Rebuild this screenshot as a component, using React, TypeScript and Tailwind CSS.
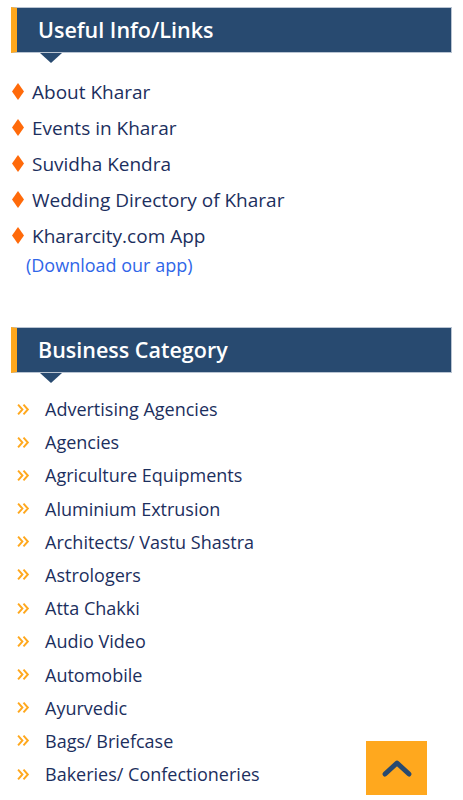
import React from "react";

const usefulLinks = [
  "About Kharar",
  "Events in Kharar",
  "Suvidha Kendra",
  "Wedding Directory of Kharar",
  "Khararcity.com App",
];

const categories = [
  "Advertising Agencies",
  "Agencies",
  "Agriculture Equipments",
  "Aluminium Extrusion",
  "Architects/ Vastu Shastra",
  "Astrologers",
  "Atta Chakki",
  "Audio Video",
  "Automobile",
  "Ayurvedic",
  "Bags/ Briefcase",
  "Bakeries/ Confectioneries",
  "Banks",
];

function SectionTitle({ title }: { title: string }) {
  return (
    <div className="relative">
      <div className="flex h-[46px] items-center border border-[#b9c4d2] border-l-[6px] border-l-[#ffa81e] bg-[#284a70] pl-[21px]">
        <h2 className="text-[21.5px] font-semibold text-white">{title}</h2>
      </div>
      {/* little pointer under the bar */}
      <div className="absolute left-[29px] top-[46px] h-0 w-0 border-l-[11px] border-r-[11px] border-t-[10px] border-l-transparent border-r-transparent border-t-[#284a70]" />
    </div>
  );
}

function Diamond() {
  return (
    <svg width="12" height="17" viewBox="0 0 12 17" className="mt-[4px] shrink-0">
      <path d="M6 0 L12 8.5 L6 17 L0 8.5 Z" fill="#ff6a0a" />
    </svg>
  );
}

function Chevrons() {
  return (
    <svg width="13" height="13" viewBox="0 0 12 12" className="shrink-0">
      <path d="M1 1.5 L5 6 L1 10.5 M6 1.5 L10 6 L6 10.5" fill="none" stroke="#ffa81e" strokeWidth="1.8" />
    </svg>
  );
}

export default function App() {
  return (
    <div
      className="min-h-screen bg-white px-[11px] pt-[7px] text-[#1c2f5e]"
      style={{ fontFamily: '"Open Sans", "Noto Sans", sans-serif' }}
    >
      <SectionTitle title="Useful Info/Links" />

      <ul className="mt-[26px] flex flex-col gap-[10px]">
        {usefulLinks.map((l) => (
          <li key={l} className="flex items-start gap-[8px] pl-[1px]">
            <Diamond />
            <span className="text-[19px] leading-[26px]">{l}</span>
          </li>
        ))}
      </ul>
      <a className="ml-[15px] mt-[3px] block text-[18px] leading-[26px] text-[#2f66e8]">(Download our app)</a>

      <div className="mt-[49px]">
        <SectionTitle title="Business Category" />
      </div>

      <ul className="mt-[23px] flex flex-col gap-[7.2px]">
        {categories.map((c) => (
          <li key={c} className="flex items-center pl-[6px]">
            <Chevrons />
            <span className="ml-[15px] text-[18px] leading-[26px]">{c}</span>
          </li>
        ))}
      </ul>

      <button className="fixed bottom-[5px] left-[366px] flex h-[54px] w-[61px] items-center justify-center bg-[#ffa81e]">
        <svg width="32" height="20" viewBox="0 0 32 20">
          <path d="M4 16 L16 5 L28 16" fill="none" stroke="#284a70" strokeWidth="5" strokeLinecap="round" strokeLinejoin="round" />
        </svg>
      </button>
    </div>
  );
}
